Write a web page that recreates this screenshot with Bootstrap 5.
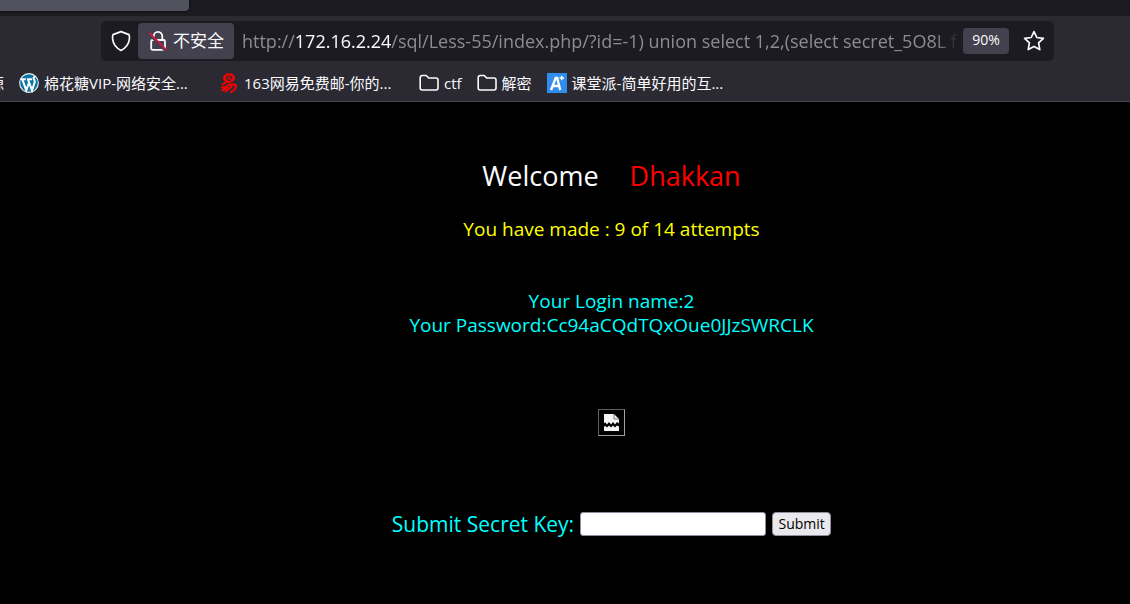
<!DOCTYPE html>
<html lang="zh-CN">
<head>
<meta charset="utf-8">
<meta name="viewport" content="width=device-width, initial-scale=1">
<title>Less-55</title>
<link rel="stylesheet" href="https://cdn.jsdelivr.net/npm/bootstrap@5.3.0/dist/css/bootstrap.min.css">
<script defer src="https://cdn.jsdelivr.net/npm/bootstrap@5.3.0/dist/js/bootstrap.bundle.min.js"></script>
<style>
  body { background: #000; color: #fbfbfe; font-family: "Open Sans", "Noto Sans CJK SC", sans-serif; font-size: 14px; overflow-x: hidden; }
  svg { display: block; flex: none; }
  .tabstrip { background: #1c1b22; height: 16px; }
  .active-tab { background: #52525e; width: 189px; height: 11px; border-radius: 0 0 4px 0; box-shadow: 0 0 3px #000; }
  .chrome { background: #2b2a33; border-bottom: 1px solid #46454c; }
  .toolbar { padding: 5px 76px 5px 101px; }
  .urlbar { background: #1c1b22; height: 40px; border-radius: 5px; padding: 0 9px; }
  .urlbar button { border: 0; padding: 0; color: inherit; background: none; }
  .urlbar .insecure { background: #42414d; height: 36px; border-radius: 4px; padding: 0 10px 0 9px; margin: 0 8px 0 6px; gap: 4px; font-size: 17px; }
  .address { flex: 1 1 0; min-width: 0; color: #8c8c91; font-size: 18px; line-height: 36px; -webkit-mask-image: linear-gradient(to left, transparent 0, #000 24px); mask-image: linear-gradient(to left, transparent 0, #000 24px); }
  .address b { color: #fbfbfe; font-weight: 400; }
  .urlbar .zoom { background: #42414d; height: 26px; width: 46px; border-radius: 4px; margin: 0 14px 0 4px; font-size: 14px; line-height: 24px; padding-bottom: 2px; }
  .bookmarks { height: 35px; padding-bottom: 1px; gap: 15px; font-size: 15px; }
  .bookmarks a { color: #fbfbfe; gap: 5px; text-decoration: none; line-height: 20px; }
  .cut { width: 4px; }
  .long { width: 160px; }
  .lesson { padding: 56px 0 48px 93px; font-size: 19px; line-height: 24px; }
  .lesson h1 { font-size: 27px; line-height: 36px; gap: 31px; font-weight: 400; }
  .red { color: #f00; }
  .attempts { color: #ff0; margin: 23px 0 48px; }
  .aqua { color: #0ff; }
  .broken { width: 27px; height: 27px; border: 1px solid #a0a0a0; border-top-color: #606060; border-left-color: #606060; margin: 72px auto; padding: 4px 5px; }
  .key { gap: 6px; }
  .key label { font-size: 21px; line-height: 32px; }
  .key input { width: 186px; height: 24px; border: 1px solid #8f8f9d; border-radius: 3px; background: #fff; padding: 1px 3px; font-size: 14px; }
  .key button { width: 59px; height: 24px; border: 1px solid #8f8f9d; border-radius: 4px; background: #e9e9ed; color: #000; padding: 0; font-size: 14px; line-height: 20px; }
</style>
</head>
<body>
<header>
  <div class="tabstrip"><div class="active-tab"></div></div>
  <div class="chrome">
    <div class="toolbar">
      <div class="urlbar d-flex align-items-center">
        <button type="button" aria-label="Tracking protection">
          <svg width="22" height="22" viewBox="0 0 22 22" fill="none" stroke="#fbfbfe" stroke-width="1.7" stroke-linejoin="round"><path d="M11 1.600 19 4.600Q19.700 6 19.400 9C18.800 14 16 18 11 20.400 6 18 3.200 14 2.600 9Q2.300 6 3 4.600Z"/></svg>
        </button>
        <button type="button" class="insecure d-flex align-items-center flex-shrink-0">
          <svg width="22" height="24" viewBox="0 0 22 24" fill="none" stroke="#fbfbfe" stroke-width="1.8"><rect x="4.200" y="11" width="13.800" height="9.800" rx="1.500"/><path d="M6.700 11V7.200a4.300 4.300 0 0 1 8.600 0V11"/><path d="M1.500 4.300 18.500 21.500" stroke="#42414d" stroke-width="3"/><path d="M2.300 3.800 19.500 21" stroke="#e60f3f" stroke-width="1.700"/></svg>
          <span>不安全</span>
        </button>
        <div class="address overflow-hidden text-nowrap" role="textbox" aria-label="Address">http://<b>172.16.2.24</b>/sql/Less-55/index.php/?id=-1) union select 1,2,(select secret_5O8L f</div>
        <button type="button" class="zoom">90%</button>
        <button type="button" aria-label="Bookmark this page">
          <svg width="22" height="22" viewBox="0 0 22 22" fill="none" stroke="#fbfbfe" stroke-width="1.700" stroke-linejoin="round"><path d="m11 1.600 2.800 5.900 6.600.9-4.800 4.500 1.200 6.700-5.800-3.200-5.800 3.200 1.200-6.700L1.600 8.400l6.600-.9Z"/></svg>
        </button>
      </div>
    </div>
    <nav class="bookmarks d-flex align-items-center text-nowrap overflow-hidden">
      <a href="#" class="cut d-flex justify-content-end overflow-hidden flex-shrink-0">源</a>
      <a href="#" class="d-flex align-items-center">
        <svg width="20" height="20" viewBox="0 0 20 20"><circle cx="10" cy="10" r="9.900" fill="#e8f3f8"/><circle cx="10" cy="10" r="8.800" fill="#0b76a5"/><path d="M1.800 6.200h5M8 6.200h5M3.300 6.400l4 11L10 9.500M9 6.400l4 11 2.500-7.500c.9-2.500-.8-3-.9-4.500 0-1 .7-1.700 1.600-1.700" fill="none" stroke="#fff" stroke-width="2"/></svg>
        <span class="long">棉花糖VIP-网络安全...</span>
      </a>
      <a href="#" class="d-flex align-items-center">
        <svg width="20" height="20" viewBox="0 0 20 20" fill="none" stroke="#f00" stroke-linecap="round"><ellipse cx="10" cy="5" rx="6" ry="4.700" fill="#f00" stroke="none"/><path d="M7.500 5h5.200c0-3-5.200-3-5.200 0 0 2.500 3 3 5 1.800" stroke="#2b2a33" stroke-width="1.100" stroke-linecap="butt"/><path d="M8 9 3.500 11.500M3 14.500c3 .5 5-.5 7-3h6c2 1 0 6-4 7.500M8.500 14 3.500 17.500M12.500 13.500 6.500 18.500" stroke-width="2"/></svg>
        <span class="long">163网易免费邮-你的...</span>
      </a>
      <a href="#" class="d-flex align-items-center">
        <svg width="20" height="20" viewBox="0 0 20 20" fill="none" stroke="#fbfbfe" stroke-width="1.600" stroke-linejoin="round"><path d="M1.200 4.500a2 2 0 0 1 2-2h4L9.700 5H17a2 2 0 0 1 2 2v8a2 2 0 0 1-2 2H3.200a2 2 0 0 1-2-2Z"/></svg>
        <span>ctf</span>
      </a>
      <a href="#" class="d-flex align-items-center">
        <svg width="20" height="20" viewBox="0 0 20 20" fill="none" stroke="#fbfbfe" stroke-width="1.600" stroke-linejoin="round"><path d="M1.200 4.500a2 2 0 0 1 2-2h4L9.700 5H17a2 2 0 0 1 2 2v8a2 2 0 0 1-2 2H3.200a2 2 0 0 1-2-2Z"/></svg>
        <span>解密</span>
      </a>
      <a href="#" class="d-flex align-items-center">
        <svg width="20" height="20" viewBox="0 0 20 20"><path fill="#2f8ded" d="M0 0h20v20H0z"/><path d="M4 17 8.700 5h1.500l3 12M6 13h6" fill="none" stroke="#fff" stroke-width="2.400"/><path d="M12.500 5h4.500M14.700 2.700v4.600" stroke="#fff" stroke-width="1.500"/></svg>
        <span class="long">课堂派-简单好用的互...</span>
      </a>
    </nav>
  </div>
</header>
<main class="lesson text-center">
  <h1 class="d-flex justify-content-center mb-0"><span>Welcome</span><span class="red">Dhakkan</span></h1>
  <p class="attempts">You have made : 9 of 14 attempts</p>
  <p class="aqua mb-0">Your Login name:2<br>Your Password:Cc94aCQdTQxOue0JJzSWRCLK</p>
  <div class="broken" role="img" aria-label="Broken image">
    <svg width="15" height="17" viewBox="0 0 15 17"><path fill="#f4f4f4" d="M0 0h10l5 5v4.500l-2-1.500-2 2.500L9 8 7 10.500 5 8 3 10.500 1.500 8.500 0 9ZM0 12.500l1.500-.5L3 13.500 5 11.500 7 13.500 9 11.500 11 13.500 13 11.500l2 1V17H0Z"/><path fill="none" stroke="#777" d="M10 0v5h5"/></svg>
  </div>
  <form class="key d-flex justify-content-center align-items-center">
    <label for="key" class="aqua">Submit Secret Key:</label>
    <input id="key" type="text">
    <button type="submit">Submit</button>
  </form>
</main>
</body>
</html>
